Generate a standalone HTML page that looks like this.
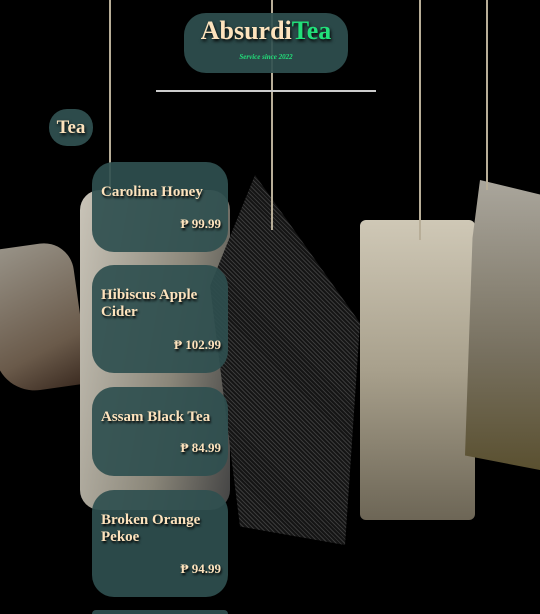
<!DOCTYPE html>
<html><head><meta charset="utf-8"><style>
*{margin:0;padding:0;box-sizing:border-box}
html,body{width:540px;height:614px;overflow:hidden}
body{background:#000;position:relative;font-family:"Liberation Serif",serif;font-weight:bold}
.s{position:absolute;top:0;width:2px;background:#b8ae98}
.bag{position:absolute}
.hdr{position:absolute;left:184px;top:13px;width:164px;height:60px;border-radius:22px;background:rgba(47,79,79,.92);text-align:center}
.hdr h1{font-size:26px;color:#fde3bd;margin-top:3px;text-shadow:1px 2px 3px #000}
.hdr h1 span{color:#22e07a}
.hdr p{font-size:7px;font-style:italic;color:#22e07a;margin-top:7px}
.hr{position:absolute;left:156px;top:90px;width:220px;height:2px;background:#ccc}
.cat{position:absolute;left:49px;top:109px;width:44px;height:37px;border-radius:18px;background:rgba(47,79,79,.95);color:#fde3bd;font-size:19px;text-align:center;line-height:37px;text-shadow:1px 2px 3px #000}
.c{position:absolute;left:92px;width:136px;border-radius:22px;background:rgba(47,79,79,.92);color:#fde3bd;text-shadow:1px 2px 2px #000}
.c .n{position:absolute;left:9px;top:22px;font-size:15px;line-height:17px;width:120px}
.c .p{position:absolute;right:7px;bottom:20px;font-size:13px}
</style></head><body>
<div class="bag" style="left:-10px;top:245px;width:90px;height:145px;background:linear-gradient(160deg,#9a958a,#6a5a4a 70%,#3a2a20);border-radius:10px 30px 10px 40px;transform:rotate(-8deg)"></div>
<div class="bag" style="left:80px;top:190px;width:150px;height:320px;background:linear-gradient(100deg,#c9c4b8,#8a8679 60%,#444);border-radius:20px"></div>
<div class="bag" style="left:210px;top:175px;width:150px;height:370px;background:repeating-linear-gradient(45deg,#3a3a3a 0 1px,#151515 1px 3px);clip-path:polygon(30% 0,100% 40%,90% 100%,20% 95%,0 30%)"></div>
<div class="bag" style="left:360px;top:220px;width:115px;height:300px;background:linear-gradient(180deg,#cfc8b6,#a8a08c 50%,#6d6656);border-radius:6px"></div>
<div class="bag" style="left:465px;top:180px;width:75px;height:290px;background:linear-gradient(180deg,#aaa69c,#77705f 60%,#5a5030);clip-path:polygon(20% 0,100% 5%,100% 100%,0 95%,10% 20%)"></div>
<div class="s" style="left:109px;height:200px"></div>
<div class="s" style="left:271px;height:230px"></div>
<div class="s" style="left:419px;height:240px"></div>
<div class="s" style="left:486px;height:190px"></div>
<div class="hdr"><h1>Absurdi<span>Tea</span></h1><p>Service since 2022</p></div>
<div class="hr"></div>
<div class="cat">Tea</div>
<div class="c" style="top:162px;height:90px"><div class="n">Carolina Honey</div><div class="p">₱ 99.99</div></div>
<div class="c" style="top:265px;height:108px"><div class="n">Hibiscus Apple Cider</div><div class="p">₱ 102.99</div></div>
<div class="c" style="top:387px;height:89px"><div class="n">Assam Black Tea</div><div class="p">₱ 84.99</div></div>
<div class="c" style="top:490px;height:107px"><div class="n">Broken Orange Pekoe</div><div class="p">₱ 94.99</div></div>
<div class="c" style="top:610px;height:4px;border-radius:22px 22px 0 0"></div>
</body></html>
